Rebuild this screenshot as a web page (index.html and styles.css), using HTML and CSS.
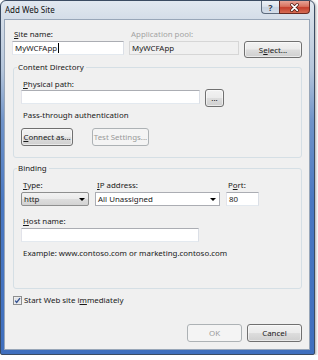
FILE: index.html
```html
<!DOCTYPE html>
<html>
<head>
<meta charset="utf-8">
<link rel="stylesheet" href="styles.css">
</head>
<body>
<div class="window">
  <div class="titlebar">
    <span class="title">Add Web Site</span>
    <div class="caption-btns">
      <div class="cbtn help">?</div>
      <div class="cbtn close">
        <svg width="31" height="13" viewBox="0 0 31 13">
          <path d="M12.5 3.5 L18.5 9.5 M18.5 3.5 L12.5 9.5" stroke="#4a1a12" stroke-width="3.4" stroke-linecap="round"/>
          <path d="M12.5 3.5 L18.5 9.5 M18.5 3.5 L12.5 9.5" stroke="#ffffff" stroke-width="1.8" stroke-linecap="round"/>
        </svg>
      </div>
    </div>
  </div>
  <div class="client">
    <div class="top-grid">
      <span class="lbl"><u>S</u>ite name:</span>
      <span class="lbl dim">Application pool:</span>
      <span></span>
      <div class="textbox">MyWCFApp<span class="caret"></span></div>
      <div class="textbox readonly">MyWCFApp</div>
      <div class="btn">S<u>e</u>lect...</div>
    </div>

    <fieldset class="group content-dir">
      <legend>Content Directory</legend>
      <span class="lbl block"><u>P</u>hysical path:</span>
      <div class="path-row">
        <div class="textbox path"></div>
        <div class="btn dots">...</div>
      </div>
      <span class="lbl block pass">Pass-through authentication</span>
      <div class="btn-row">
        <div class="btn connect"><u>C</u>onnect as...</div>
        <div class="btn disabled test">Test Settings...</div>
      </div>
    </fieldset>

    <fieldset class="group binding">
      <legend>Binding</legend>
      <div class="bind-grid">
        <span class="lbl"><u>T</u>ype:</span>
        <span class="lbl"><u>I</u>P address:</span>
        <span class="lbl">P<u>o</u>rt:</span>
        <div class="combo list">http<span class="arrow"></span></div>
        <div class="combo">All Unassigned<span class="arrow"></span></div>
        <div class="textbox">80</div>
      </div>
      <span class="lbl block host-lbl"><u>H</u>ost name:</span>
      <div class="textbox host"></div>
      <span class="lbl block example">Example: www.contoso.com or marketing.contoso.com</span>
    </fieldset>

    <div class="check-row">
      <span class="checkbox">
        <svg width="9" height="9" viewBox="0 0 9 9">
          <rect x="0.5" y="0.5" width="8" height="8" fill="#f4f4f4" stroke="#8e8f8f"/>
          <rect x="1.5" y="1.5" width="6" height="6" fill="#e2e4e8"/>
          <path d="M2.2 4.6 L3.7 6.4 L7 2.2" fill="none" stroke="#304f8f" stroke-width="1.3"/>
        </svg>
      </span>
      <span class="lbl">Start Web site i<u>m</u>mediately</span>
    </div>

    <div class="footer">
      <div class="btn disabled dlg">OK</div>
      <div class="btn dlg">Cancel</div>
    </div>
  </div>
</div>
</body>
</html>
```

FILE: styles.css
```css
* {
  box-sizing: border-box;
}

body {
  margin: 0;
  background: #ffffff;
  font-family: "Noto Sans", "Open Sans", sans-serif;
  font-size: 7.9px;
  color: #1a1a1a;
}

.window {
  width: 315px;
  height: 355px;
  border: 1px solid #3b4b62;
  border-radius: 6px 6px 2px 2px;
  padding: 0 4px 4px 3px;
  background: linear-gradient(180deg, #e1e8f0 0px, #d3dce7 20px, #b4c5db 70px, #6f93c9 120px, #4a78c2 200px, #3f6fbe 100%);
  display: flex;
  flex-direction: column;
  box-shadow: 1px 1px 3px rgba(0, 0, 0, 0.35);
}

.titlebar {
  height: 18px;
  margin: 0 -3px 0 -2px;
  padding-left: 3px;
  display: flex;
  justify-content: space-between;
  align-items: flex-start;
}

.title {
  line-height: 17px;
  font-size: 8px;
  color: #111;
}

.caption-btns {
  display: flex;
  margin-right: 3px;
}

.cbtn {
  height: 13px;
  display: flex;
  align-items: center;
  justify-content: center;
  border: 1px solid #5d6b7d;
  border-top: none;
}

.help {
  width: 18px;
  border-right: none;
  border-radius: 0 0 0 4px;
  background: linear-gradient(180deg, #eef2f7 0%, #dae2ec 45%, #c6d2e0 55%, #d5deea 100%);
  color: #2b3a50;
  font-weight: bold;
  font-size: 9px;
  text-shadow: 0 0 1px #fff;
}

.close {
  width: 31px;
  border-color: #6a2a22;
  border-radius: 0 0 4px 0;
  background: linear-gradient(180deg, #e6a396 0%, #d8725f 45%, #c43e2c 55%, #d66d55 100%);
}

.client {
  flex: 1;
  background: #f0f0f0;
  border: 1px solid #98a6b8;
  display: flex;
  flex-direction: column;
  padding: 9px 7px 7px 7px;
}

.lbl {
  line-height: 11px;
  padding-left: 2px;
  white-space: nowrap;
}

.lbl.block {
  display: block;
}

.dim {
  color: #a3a3a3;
}

u {
  text-decoration-thickness: 1px;
  text-underline-offset: 1px;
}

.top-grid {
  display: grid;
  grid-template-columns: 112px 110px 58px;
  column-gap: 5px;
  row-gap: 1px;
  align-items: start;
}

.textbox {
  height: 14px;
  background: #ffffff;
  border: 1px solid;
  border-color: #abadb3 #dbdfe6 #e3e9ef #e2e3ea;
  padding: 0 2px;
  line-height: 12px;
  white-space: nowrap;
  display: flex;
  align-items: center;
}

.caret {
  display: inline-block;
  width: 1px;
  height: 10px;
  background: #000;
  margin-left: 1px;
}

.textbox.readonly {
  background: #f0f0f0;
  border-color: #d6d6d6;
}

.btn {
  height: 17px;
  border: 1px solid #707070;
  border-radius: 3px;
  background: linear-gradient(180deg, #f2f2f2 0%, #ebebeb 48%, #dddddd 52%, #cfcfcf 100%);
  box-shadow: inset 0 0 0 1px rgba(255, 255, 255, 0.55);
  display: flex;
  align-items: center;
  justify-content: center;
  white-space: nowrap;
}

.btn.disabled {
  border-color: #adb2b5;
  background: #f4f4f4;
  color: #9a9a9a;
  box-shadow: none;
}

.group {
  margin: 4px 0 0 1px;
  border: 1px solid #d5dfe5;
  border-radius: 3px;
  min-width: 0;
}

.group legend {
  padding: 0 2px 0 1px;
  margin-left: -4px;
  line-height: 11px;
}

.content-dir {
  padding: 6px 7px 11px 7px;
}

.path-row {
  display: flex;
  gap: 5px;
  align-items: flex-start;
}

.textbox.path {
  width: 179px;
}

.btn.dots {
  width: 19px;
  height: 18px;
  margin-top: -1px;
}

.pass {
  margin-top: 3px;
}

.btn-row {
  display: flex;
  gap: 19px;
  margin-top: 7px;
}

.btn.connect {
  width: 52px;
  height: 18px;
}

.btn.test {
  width: 57px;
  height: 18px;
}

.binding {
  margin-top: 5px;
  padding: 6px 7px 29px 7px;
}

.bind-grid {
  display: grid;
  grid-template-columns: 68px 125px 33px;
  column-gap: 6px;
  row-gap: 1px;
}

.combo {
  height: 14px;
  position: relative;
  background: #ffffff;
  border: 1px solid #abadb3;
  padding: 0 2px;
  display: flex;
  align-items: center;
  white-space: nowrap;
}

.combo.list {
  border-color: #8e8f8f;
  border-radius: 2px;
  background: linear-gradient(180deg, #f2f2f2 0%, #ebebeb 48%, #dddddd 52%, #d3d3d3 100%);
}

.arrow {
  position: absolute;
  right: 3px;
  top: 5px;
  width: 0;
  height: 0;
  border-top: 3px solid #000;
  border-left: 3px solid transparent;
  border-right: 3px solid transparent;
}

.host-lbl {
  margin-top: 10px;
}

.textbox.host {
  width: 178px;
  margin-top: 1px;
}

.example {
  margin-top: 6px;
}

.check-row {
  margin: 6px 0 0 1px;
  display: flex;
  align-items: center;
  gap: 0;
}

.checkbox {
  width: 9px;
  height: 9px;
  display: flex;
}

.footer {
  margin-top: auto;
  display: flex;
  justify-content: flex-end;
  gap: 5px;
}

.btn.dlg {
  width: 55px;
  height: 18px;
}
```
